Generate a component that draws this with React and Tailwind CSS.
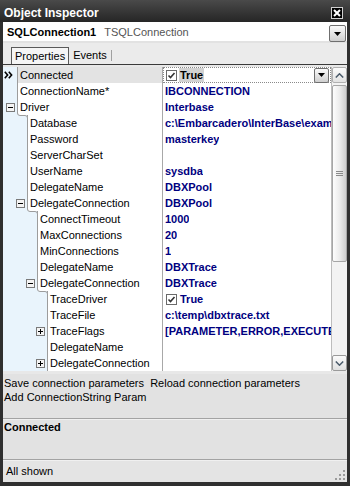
import React from "react";

const IND = ["w-[15px]", "w-[25px]", "w-[35px]", "w-[45px]"];
const EXP_LEFT = ["left-[3px]", "left-[13px]", "left-[23px]", "left-[33px]"];
const CURVE_LEFT = ["left-[14px]", "left-[24px]", "left-[34px]", "left-[44px]"];

const rows = [
  { l: 0, n: "Connected", v: "True", check: true, sel: true },
  { l: 0, n: "ConnectionName*", v: "IBCONNECTION" },
  { l: 0, n: "Driver", v: "Interbase", exp: "-" },
  { l: 1, n: "Database", v: "c:\\Embarcadero\\InterBase\\examples\\database\\employee.gdb" },
  { l: 1, n: "Password", v: "masterkey" },
  { l: 1, n: "ServerCharSet", v: "" },
  { l: 1, n: "UserName", v: "sysdba" },
  { l: 1, n: "DelegateName", v: "DBXPool" },
  { l: 1, n: "DelegateConnection", v: "DBXPool", exp: "-" },
  { l: 2, n: "ConnectTimeout", v: "1000" },
  { l: 2, n: "MaxConnections", v: "20" },
  { l: 2, n: "MinConnections", v: "1" },
  { l: 2, n: "DelegateName", v: "DBXTrace" },
  { l: 2, n: "DelegateConnection", v: "DBXTrace", exp: "-" },
  { l: 3, n: "TraceDriver", v: "True", check: true },
  { l: 3, n: "TraceFile", v: "c:\\temp\\dbxtrace.txt" },
  { l: 3, n: "TraceFlags", v: "[PARAMETER,ERROR,EXECUTE,COMMAND,CONNECT]", exp: "+" },
  { l: 3, n: "DelegateName", v: "" },
  { l: 3, n: "DelegateConnection", v: "", exp: "+" },
];

function Expander({ sign }) {
  return (
    <svg width="9" height="9" viewBox="0 0 9 9">
      <rect x="0.5" y="0.5" width="8" height="8" fill="#f4f4f4" stroke="#7a7a7a" />
      <path d="M2 4.5H7" stroke="#000" strokeWidth="1" />
      {sign === "+" && <path d="M4.5 2V7" stroke="#000" strokeWidth="1" />}
    </svg>
  );
}

function CheckBox() {
  return (
    <svg width="11" height="11" viewBox="0 0 11 11" className="shrink-0">
      <rect x="0.5" y="0.5" width="10" height="10" fill="#fff" stroke="#6a6a6a" />
      <path d="M2.5 5.5L4.5 7.5L8.5 3" fill="none" stroke="#333" strokeWidth="1.6" />
    </svg>
  );
}

function DropBtn({ size = "w-[15px] h-[15px]" }) {
  return (
    <div className={`${size} shrink-0 border border-[#6f6f6f] rounded-[2px] bg-gradient-to-b from-[#fafafa] to-[#cfcfcf] flex items-center justify-center`}>
      <svg width="7" height="4" viewBox="0 0 7 4">
        <path d="M0 0H7L3.5 4Z" fill="#000" />
      </svg>
    </div>
  );
}

function Row({ r }) {
  return (
    <div className="relative flex h-[16px] leading-[16px]">
      <div className={`relative shrink-0 ${IND[r.l]} bg-[#e9f4fc] border-r border-[#9c9c9c]`}>
        {r.sel && (
          <svg width="9" height="8" viewBox="0 0 9 8" className="absolute left-[1px] top-[4px]">
            <path d="M0.8 0.8L3.6 4L0.8 7.2M4.8 0.8L7.6 4L4.8 7.2" fill="none" stroke="#000" strokeWidth="1.6" />
          </svg>
        )}
        {r.exp && (
          <div className={`absolute ${EXP_LEFT[r.l]} top-[4px] flex`}>
            <Expander sign={r.exp} />
          </div>
        )}
      </div>
      {r.exp === "-" && (
        <svg width="12" height="7" viewBox="0 0 12 7" className={`absolute z-10 ${CURVE_LEFT[r.l]} top-[13px]`}>
          <path d="M0 0H0.5V1Q0.5 3.5 3 3.5H8Q10.5 3.5 10.5 6V7H0Z" fill="#e9f4fc" />
          <path d="M0.5 0V1Q0.5 3.5 3 3.5H8Q10.5 3.5 10.5 6V7" fill="none" stroke="#9c9c9c" />
        </svg>
      )}
      <div className={`flex-1 min-w-0 pl-[2px] whitespace-nowrap overflow-hidden ${r.sel ? "bg-[#e3e3e3]" : ""}`}>
        {r.n}
      </div>
      <div className="w-[169px] shrink-0 border-l border-[#a8a8a8] flex overflow-hidden">
        {r.sel ? (
          <div className="flex-1 h-[16px] border border-dotted border-[#8a8a8a] bg-white flex items-center pl-[2px] pr-[1px]">
            <CheckBox />
            <span className="ml-[2px] bg-[#d2d2d2] px-[1px] leading-[14px] font-bold text-black">True</span>
            <div className="flex-1" />
            <DropBtn />
          </div>
        ) : r.check ? (
          <div className="flex items-center pl-[3px] gap-[3px]">
            <CheckBox />
            <span className="font-bold text-[#000080]">{r.v}</span>
          </div>
        ) : (
          <div className="pl-[2px] whitespace-nowrap overflow-hidden font-bold text-[#000080]">{r.v}</div>
        )}
      </div>
    </div>
  );
}

function ScrollBar() {
  return (
    <div className="w-[16px] shrink-0 flex flex-col bg-[#f3f3f3] border-l border-[#bdbdbd]">
      <div className="h-[16px] border border-[#b0b0b0] rounded-[2px] bg-gradient-to-b from-[#fbfbfb] to-[#e2e2e2] flex items-center justify-center">
        <svg width="9" height="5" viewBox="0 0 9 5">
          <path d="M0.8 4.5L4.5 0.8L8.2 4.5" fill="none" stroke="#4a5a6a" strokeWidth="1.5" />
        </svg>
      </div>
      <div className="h-[2px]" />
      <div className="h-[177px] border border-[#a6a6a6] rounded-[2px] bg-gradient-to-r from-[#fdfdfd] via-[#ececec] to-[#cdcdcd] flex items-center justify-center">
        <svg width="7" height="6" viewBox="0 0 7 6">
          <path d="M0 0.5H7M0 2.5H7M0 4.5H7" stroke="#8a8a8a" />
        </svg>
      </div>
      <div className="flex-1" />
      <div className="h-[16px] border border-[#9a9a9a] rounded-[2px] bg-gradient-to-b from-[#fbfbfb] to-[#e0e0e0] flex items-center justify-center">
        <svg width="9" height="5" viewBox="0 0 9 5">
          <path d="M0.8 0.5L4.5 4.2L8.2 0.5" fill="none" stroke="#4a5a6a" strokeWidth="1.5" />
        </svg>
      </div>
    </div>
  );
}

export default function App() {
  return (
    <div className="w-[350px] h-[486px] bg-[#2f2f2f] flex flex-col font-['Liberation_Sans',sans-serif] text-[11px] text-black overflow-hidden">
      {/* Title bar */}
      <div className="h-[22px] shrink-0 flex items-center pl-[4px] pr-[7px] pt-[3px] bg-gradient-to-b from-[#4a4a4a] to-[#262626]">
        <span className="text-white font-bold text-[12px] leading-none">Object Inspector</span>
        <div className="flex-1" />
        <div className="w-[12px] h-[12px] border border-[#cfcfcf] bg-black flex items-center justify-center">
          <svg width="8" height="8" viewBox="0 0 8 8">
            <path d="M1 1L7 7M7 1L1 7" stroke="#fff" strokeWidth="2" />
          </svg>
        </div>
      </div>

      <div className="flex-1 flex flex-col px-[3px] min-h-0">
        {/* Combo */}
        <div className="h-[19px] shrink-0 bg-white flex items-center pl-[4px] pr-[1px] pt-[2px] relative">
          <span className="font-bold text-[11px]">SQLConnection1</span>
          <span className="ml-[8px] text-[#555]">TSQLConnection</span>
          <div className="flex-1" />
          <div className="mt-[2px]">
            <DropBtn size="w-[17px] h-[17px]" />
          </div>
        </div>

        {/* Tabs */}
        <div className="h-[23px] shrink-0 bg-[#ebebeb] border-t-[2px] border-[#e2e2e2] flex items-end pl-[8px]">
          <div className="h-[17px] px-[3px] border border-b-0 border-[#5a5a5a] bg-[#f5f5f5] flex items-center">Properties</div>
          <div className="h-[17px] px-[4px] flex items-center">Events</div>
          <div className="w-px h-[11px] bg-[#a0a0a0] mb-[3px]" />
        </div>

        {/* Grid */}
        <div className="h-[310px] shrink-0 border-t border-[#3a3a3a] bg-[#e8e8e8] pt-[2px] pb-[3px] flex flex-col">
          <div className="flex-1 flex bg-white">
            <div className="flex-1 min-w-0 flex flex-col bg-white">
              {rows.map((r, i) => (
                <Row key={i} r={r} />
              ))}
            </div>
            <ScrollBar />
          </div>
        </div>

        {/* Commands */}
        <div className="h-[44px] shrink-0 bg-[#e2e2e2] pl-[1px] pt-[2px] leading-[14px]">
          <div>Save connection parameters&nbsp; Reload connection parameters</div>
          <div>Add ConnectionString Param</div>
        </div>
        <div className="h-[2px] shrink-0 border-t border-[#a3a3a3] bg-[#f0f0f0]" />
        <div className="h-[39px] shrink-0 bg-[#e2e2e2] pl-[1px] leading-[14px] font-bold">Connected</div>
        <div className="h-[2px] shrink-0 border-t border-[#a3a3a3] bg-[#f0f0f0]" />
        <div className="h-[21px] shrink-0 bg-[#e4e4e4] pl-[3px] flex items-center relative">
          <span>All shown</span>
          <div className="flex-1" />
          <svg width="11" height="11" viewBox="0 0 11 11" className="self-end mb-[1px] mr-[1px]">
            <g fill="#9a9a9a">
              <rect x="8" y="0" width="2" height="2" />
              <rect x="4" y="4" width="2" height="2" />
              <rect x="8" y="4" width="2" height="2" />
              <rect x="0" y="8" width="2" height="2" />
              <rect x="4" y="8" width="2" height="2" />
              <rect x="8" y="8" width="2" height="2" />
            </g>
          </svg>
        </div>
      </div>
      <div className="h-[4px] shrink-0" />
    </div>
  );
}
